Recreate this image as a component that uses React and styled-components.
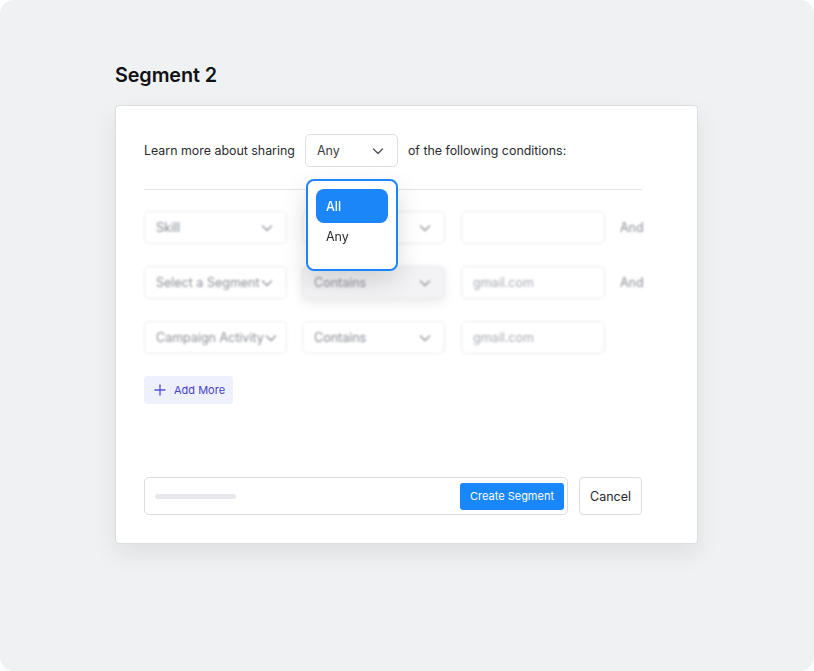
import styled, { createGlobalStyle } from "styled-components";

const GlobalStyle = createGlobalStyle`
  html, body {
    margin: 0;
    padding: 0;
    background: #ffffff;
  }

  body {
    font-family: Inter, "Noto Sans", "Liberation Sans", sans-serif;
    -webkit-font-smoothing: antialiased;
  }
`;

const Chevron = ({ size = 14, color = "#5d6069" }) => (
  <svg width={size} height={size} viewBox="0 0 14 14" fill="none">
    <path
      d="M2.5 5l4.5 4.5L11.5 5"
      stroke={color}
      strokeWidth="1.6"
      strokeLinecap="round"
      strokeLinejoin="round"
    />
  </svg>
);

const Plus = () => (
  <svg width="12" height="12" viewBox="0 0 12 12" fill="none">
    <path d="M6 1v10M1 6h10" stroke="#5a54d6" strokeWidth="1.4" strokeLinecap="round" />
  </svg>
);

const rows = [
  { field: "Skill", op: "", value: "", join: "And" },
  { field: "Select a Segment", op: "Contains", value: "gmail.com", join: "And", muted: true },
  { field: "Campaign Activity", op: "Contains", value: "gmail.com", join: "" },
];

const App = () => {
  return (
    <>
      <GlobalStyle />
      <Page>
        <Title>Segment 2</Title>
        <Card>
          <Header>
            <Label>Learn more about sharing</Label>
            <MatchSelect>
              <SelectBox $width="93px">
                <span>Any</span>
                <Chevron />
              </SelectBox>
              <Menu>
                <MenuItem $active>All</MenuItem>
                <MenuItem>Any</MenuItem>
              </Menu>
            </MatchSelect>
            <Label>of the following conditions:</Label>
          </Header>
          <Divider />
          <Conditions>
            {rows.map((row, i) => (
              <ConditionRow key={i}>
                <SelectBox $width="143px" $faded>
                  <span>{row.field}</span>
                  <Chevron color="#9a9ca4" />
                </SelectBox>
                <SelectBox $width="143px" $faded $muted={row.muted}>
                  <span>{row.op}</span>
                  <Chevron color="#9a9ca4" />
                </SelectBox>
                <TextBox>{row.value}</TextBox>
                <Join>{row.join}</Join>
              </ConditionRow>
            ))}
          </Conditions>
          <AddButton>
            <Plus />
            Add More
          </AddButton>
          <Footer>
            <NameField>
              <Placeholder />
              <PrimaryButton>Create Segment</PrimaryButton>
            </NameField>
            <GhostButton>Cancel</GhostButton>
          </Footer>
        </Card>
      </Page>
    </>
  );
};

const Page = styled.div`
  width: 814px;
  height: 671px;
  box-sizing: border-box;
  background: #f0f1f3;
  border-radius: 14px;
  padding: 64px 0 0 115px;
`;

const Title = styled.h1`
  margin: 0 0 18px;
  font-size: 19.8px;
  line-height: 23px;
  font-weight: 600;
  color: #111214;
  letter-spacing: -0.1px;
`;

const Card = styled.div`
  width: 583px;
  height: 439px;
  box-sizing: border-box;
  background: #ffffff;
  border: 1px solid #dcdde1;
  border-radius: 4px;
  box-shadow: 0 10px 24px rgba(20, 22, 30, 0.08);
  padding: 28px 55px 28px 28px;
  display: flex;
  flex-direction: column;
`;

const Header = styled.div`
  display: flex;
  align-items: center;
  gap: 10px;
  height: 33px;
`;

const Label = styled.span`
  font-size: 12.4px;
  color: #2a2b30;
  white-space: nowrap;
`;

const MatchSelect = styled.div`
  position: relative;
`;

const SelectBox = styled.div`
  width: ${(p) => p.$width};
  flex-shrink: 0;
  height: 33px;
  box-sizing: border-box;
  border: 1px solid ${(p) => (p.$faded ? "#e9eaee" : "#dedfe3")};
  border-radius: 5px;
  background: ${(p) => (p.$muted ? "#f3f3f5" : "#ffffff")};
  box-shadow: ${(p) => (p.$muted ? "0 4px 12px rgba(0,0,0,0.08)" : "none")};
  display: flex;
  align-items: center;
  justify-content: space-between;
  padding: 0 12px 0 11px;
  font-size: 12.5px;
  color: ${(p) => (p.$faded ? "#8d8f97" : "#3a3c42")};

  span {
    white-space: nowrap;
  }

  svg {
    flex-shrink: 0;
  }
`;

const Menu = styled.div`
  position: absolute;
  top: 45px;
  left: 1px;
  width: 92px;
  height: 92px;
  box-sizing: border-box;
  background: #ffffff;
  border: 2px solid #1a86f7;
  border-radius: 8px;
  padding: 8px;
  box-shadow: 0 10px 26px rgba(0, 0, 0, 0.14);
  display: flex;
  flex-direction: column;
  z-index: 2;
`;

const MenuItem = styled.div`
  height: ${(p) => (p.$active ? "34px" : "26px")};
  border-radius: 8px;
  display: flex;
  align-items: center;
  padding-left: 10px;
  font-size: 12.5px;
  font-weight: ${(p) => (p.$active ? 500 : 400)};
  background: ${(p) => (p.$active ? "#1a86f7" : "transparent")};
  color: ${(p) => (p.$active ? "#ffffff" : "#2a2b30")};
`;

const Divider = styled.div`
  height: 1px;
  background: #e4e5e8;
  margin: 22px 0 21px;
`;

const Conditions = styled.div`
  display: flex;
  flex-direction: column;
  gap: 22px;
  filter: blur(1.3px);
`;

const ConditionRow = styled.div`
  display: flex;
  align-items: center;
  gap: 15px;
`;

const TextBox = styled.div`
  width: 144px;
  flex-shrink: 0;
  height: 33px;
  box-sizing: border-box;
  border: 1px solid #e9eaee;
  border-radius: 5px;
  display: flex;
  align-items: center;
  padding-left: 11px;
  font-size: 12.5px;
  color: #a8aab1;
  margin-left: 1px;
`;

const Join = styled.span`
  font-size: 12.5px;
  color: #8d8f97;
`;

const AddButton = styled.button`
  align-self: flex-start;
  margin-top: 22px;
  height: 28px;
  width: 89px;
  border: none;
  border-radius: 4px;
  background: #eef0fd;
  color: #4640c4;
  font-family: inherit;
  font-size: 11px;
  display: flex;
  align-items: center;
  gap: 8px;
  padding: 0 0 0 10px;
`;

const Footer = styled.div`
  margin-top: auto;
  display: flex;
  gap: 11px;
  height: 38px;
`;

const NameField = styled.div`
  width: 424px;
  box-sizing: border-box;
  border: 1px solid #dcdde1;
  border-radius: 5px;
  display: flex;
  align-items: center;
  justify-content: space-between;
  padding: 0 3px 0 10px;
`;

const Placeholder = styled.div`
  width: 81px;
  height: 5px;
  border-radius: 3px;
  background: #e6e8ee;
`;

const PrimaryButton = styled.button`
  height: 27px;
  width: 104px;
  border: none;
  border-radius: 3px;
  background: #1787fb;
  color: #ffffff;
  font-family: inherit;
  font-size: 11px;
  padding: 0;
`;

const GhostButton = styled.button`
  width: 63px;
  height: 38px;
  box-sizing: border-box;
  border: 1px solid #dcdde1;
  border-radius: 4px;
  background: #ffffff;
  color: #24262c;
  font-family: inherit;
  font-size: 12.5px;
  padding: 0;
`;

export default App;
